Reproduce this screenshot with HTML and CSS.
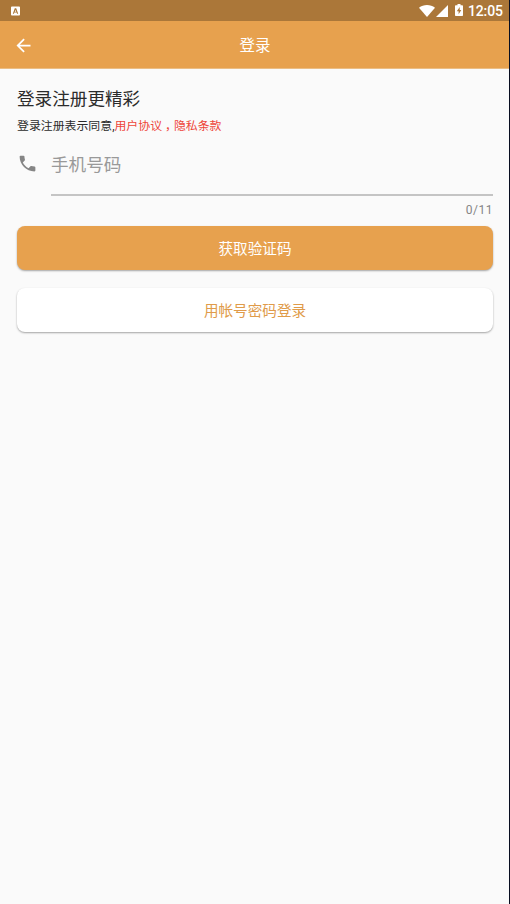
FILE: index.html
```html
<!DOCTYPE html>
<html lang="zh-CN">
<head>
<meta charset="utf-8">
<title>登录</title>
<link rel="stylesheet" href="styles.css">
</head>
<body>
<div class="screen">
  <div class="status">
    <svg class="badge" viewBox="0 0 10 10"><path fill="#fff" fill-rule="evenodd" d="M1 0h8a1 1 0 0 1 1 1v8a1 1 0 0 1-1 1H1a1 1 0 0 1-1-1V1a1 1 0 0 1 1-1zM4.200 2 2 8h1.300l.4-1.200h2.600l.4 1.200H8L5.800 2zM5 3.500l.8 2.200H4.200z"/></svg>
    <span class="spacer"></span>
    <svg class="wifi" viewBox="0 0 16 12"><path fill="#fff" d="M0 2.700C4.400-.9 11.600-.9 16 2.700L8 12z"/></svg>
    <svg class="signal" viewBox="0 0 12 12"><path fill="#fff" d="M12 0v12H0z"/></svg>
    <svg class="battery" viewBox="0 0 8 12"><path fill="#fff" fill-rule="evenodd" d="M2.500 0h3v1.300H7.200a.8.8 0 0 1 .8.800v9.100a.8.8 0 0 1-.8.800H.8a.8.8 0 0 1-.8-.8V2.100a.8.8 0 0 1 .8-.8h1.700zM4.700 3 1.800 7.200h1.800V10.300L6.300 6H4.700z"/></svg>
    <span class="clock">12:05</span>
  </div>
  <header class="appbar">
    <svg class="back" viewBox="0 0 24 24"><path fill="#fff" d="M20 11H7.830l5.590-5.590L12 4l-8 8 8 8 1.410-1.410L7.830 13H20v-2z"/></svg>
    <h1 class="title">登录</h1>
  </header>
  <main class="content">
    <h2 class="headline">登录注册更精彩</h2>
    <p class="terms">登录注册表示同意,<span class="link">用户协议<span class="comma">，</span>隐私条款</span></p>
    <div class="field">
      <svg class="phone" viewBox="0 0 24 24"><path fill="#858585" d="M6.620 10.790c1.440 2.830 3.760 5.140 6.590 6.590l2.200-2.200c.27-.27.67-.36 1.020-.24 1.120.37 2.330.57 3.570.57.55 0 1 .45 1 1V20c0 .55-.45 1-1 1-9.390 0-17-7.610-17-17 0-.55.45-1 1-1h3.500c.55 0 1 .45 1 1 0 1.250.2 2.450.57 3.570.11.35.03.74-.25 1.020l-2.200 2.200z"/></svg>
      <div class="input">
        <div class="hint">手机号码</div>
        <div class="counter">0/11</div>
      </div>
    </div>
    <div class="button primary">获取验证码</div>
    <div class="button secondary">用帐号密码登录</div>
  </main>
</div>
</body>
</html>
```
FILE: styles.css
```css
* { box-sizing: border-box; }
body { margin: 0; font-family: Roboto, "Noto Sans CJK SC", sans-serif; background: #fafafa; }
.screen { height: 904px; border-right: 1px solid #080d20; background: #fafafa; overflow: hidden; }
.status { height: 21px; background: #ab7739; display: flex; align-items: center; padding: 0 6px 0 11px; }
.badge { width: 9px; height: 10px; margin-top: 1px; }
.spacer { flex: 1; }
.wifi { width: 16px; height: 12px; }
.signal { width: 12px; height: 12px; margin-left: 1px; }
.battery { width: 8px; height: 12px; margin: 0 5px 2px 7px; }
.clock { width: 35px; color: #fff; font-size: 14px; line-height: 21px; font-weight: 500; letter-spacing: -.15px; white-space: nowrap; margin-top: 1px; }
.appbar { height: 48px; background: #e7a14e; display: grid; grid-template-columns: 48px 1fr 48px; align-items: center; border-bottom: 1px solid #ebbd84; }
.back { width: 21px; height: 21px; margin: 1px 0 0 13px; }
.title { margin: 0; padding: 2px 0 0 1px; text-align: center; color: #fff; font-size: 15.5px; line-height: 24px; font-weight: 400; }
.content { padding: 17px 16px 0 17px; }
.headline { margin: 0; font-size: 17.6px; line-height: 26px; font-weight: 400; color: #2b2b2b; }
.terms { margin: 4px 0 0; height: 20px; font-size: 11.9px; line-height: 20px; color: #2b2b2b; white-space: nowrap; }
.link { color: #ee4539; }
.comma { font-feature-settings: "halt"; padding: 0 .25em; }
.field { display: flex; margin-top: 9px; }
.phone { width: 21px; height: 21px; margin: 8px 13px 0 0; }
.input { flex: 1; }
.hint { height: 51px; padding-top: 7px; border-bottom: 2px solid #c4c4c4; font-size: 17.6px; line-height: 26px; color: #999; }
.counter { height: 30px; padding: 5px 0 0; font-size: 12px; line-height: 18px; letter-spacing: .5px; text-align: right; color: #858585; }
.button { height: 44px; border-radius: 8px; display: flex; align-items: center; justify-content: center; padding-bottom: 2px; font-size: 14.6px; box-shadow: 0 1px 2px rgba(0, 0, 0, .35); }
.primary { background: #e7a14e; color: #fff; }
.secondary { margin-top: 18px; background: #fff; color: #e09b4a; }
```
